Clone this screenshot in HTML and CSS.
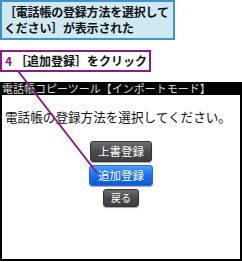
FILE: index.html
```html
<!DOCTYPE html>
<html lang="ja">
<head>
<meta charset="utf-8">
<link rel="stylesheet" href="styles.css">
</head>
<body>
<div class="page">
  <div class="callout">［電話帳の登録方法を選択して<br>ください］が表示された</div>
  <div class="step"><span class="num">4</span>［追加登録］をクリック</div>
  <div class="phone">
    <div class="titlebar">電話帳コピーツール【インポートモード】</div>
    <div class="screen">
      <p class="msg">電話帳の登録方法を選択してください。</p>
      <div class="buttons">
        <div class="btn">上書登録</div>
        <div class="btn primary">追加登録</div>
        <div class="btn small">戻る</div>
      </div>
    </div>
  </div>
  <svg class="leader" width="242" height="262" viewBox="0 0 242 262">
    <line x1="18" y1="71" x2="97" y2="173" stroke="#8b1a8b" stroke-width="2"/>
  </svg>
</div>
</body>
</html>
```
FILE: styles.css
```css
* { box-sizing: border-box; }
html, body { margin: 0; padding: 0; background: #fff; }
.page {
  position: relative;
  width: 242px;
  height: 262px;
  overflow: hidden;
  font-family: "Noto Sans CJK JP", sans-serif;
  color: #111;
}
.callout {
  width: 175px;
  height: 40px;
  background: #cfe9f3;
  border: 2px solid #3f93c9;
  padding: 2px 0 0 2px;
  font-size: 12px;
  line-height: 16px;
  font-weight: 700;
  letter-spacing: -0.2px;
}
.step {
  margin-top: 10px;
  width: 151px;
  height: 22px;
  border: 2px solid #8b1a8b;
  background: #fff;
  padding: 0 0 0 3px;
  font-size: 12px;
  line-height: 18px;
  font-weight: 700;
}
.num { color: #8b1a8b; margin-right: 3px; }
.phone {
  margin-top: 10px;
  width: 242px;
  height: 179px;
  border: 2px solid #000;
  border-top: 0;
  display: flex;
  flex-direction: column;
}
.titlebar {
  height: 13px;
  background: #000;
  color: #dcdcdc;
  font-size: 11px;
  line-height: 13px;
  white-space: nowrap;
  margin: 0 -2px;
  padding-left: 2px;
}
.screen { flex: 1; display: flex; flex-direction: column; }
.msg {
  margin: 14px 0 0 3px;
  font-size: 12.6px;
  line-height: 16px;
  white-space: nowrap;
}
.buttons {
  margin-top: 16px;
  display: flex;
  flex-direction: column;
  align-items: center;
  gap: 3px;
}
.btn {
  width: 62px;
  height: 21px;
  border-radius: 3px;
  background: linear-gradient(#6e6e6e, #4a4a4a 50%, #3e3e3e);
  border: 1px solid #333;
  box-shadow: 0 1px 1px rgba(0,0,0,0.35);
  color: #fff;
  font-size: 11.5px;
  line-height: 19px;
  text-align: center;
}
.btn.primary {
  width: 64px;
  background: linear-gradient(#4c9bff, #1a6ef0 50%, #0c5ad8);
  border-color: #2a6cd6;
}
.btn.small {
  width: 36px;
  height: 18px;
  font-size: 10px;
  line-height: 16px;
}
.leader {
  position: absolute;
  left: 0;
  top: 0;
  pointer-events: none;
}
```
